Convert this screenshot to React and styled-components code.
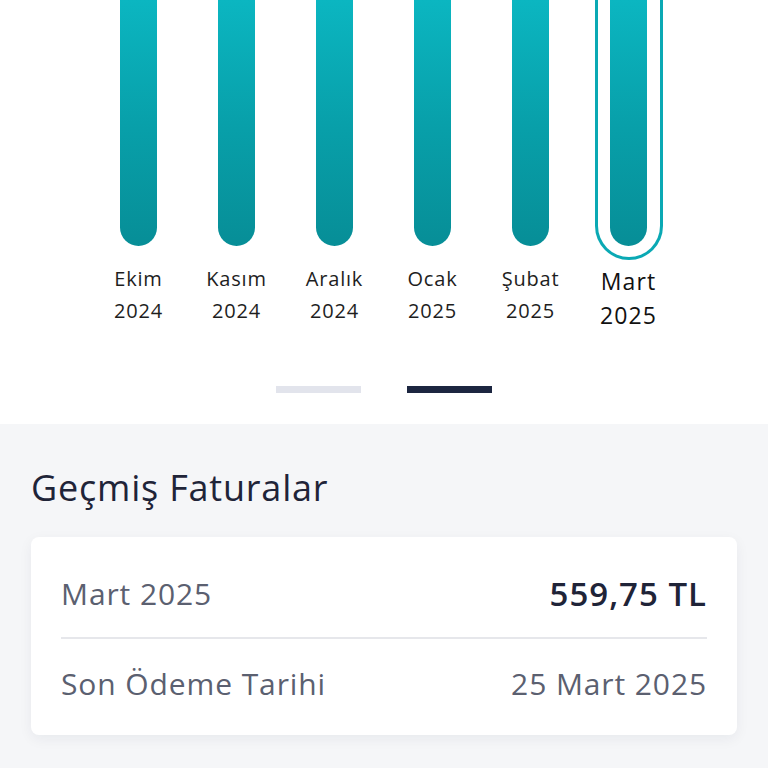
import React from "react";
import styled, { createGlobalStyle } from "styled-components";

const Global = createGlobalStyle`
  html, body { margin: 0; padding: 0; background: #f5f6f8; }
  body { font-family: "Open Sans", "Noto Sans", sans-serif; -webkit-font-smoothing: antialiased; }
`;

const Page = styled.div`
  width: 768px;
  min-height: 768px;
  background: #f5f6f8;
  overflow: hidden;
`;

const ChartSection = styled.section`
  background: #ffffff;
  height: 424px;
  display: flex;
  flex-direction: column;
  align-items: center;
`;

const Columns = styled.div`
  display: grid;
  grid-template-columns: repeat(6, 98px);
  width: 589px;
  height: 332px;
`;

const Column = styled.div`
  display: flex;
  flex-direction: column;
  align-items: center;
`;

const BarWrap = styled.div`
  height: 260px;
  display: flex;
  flex-direction: column;
  align-items: center;
`;

const Outline = styled.div`
  width: 68px;
  height: 260px;
  box-sizing: border-box;
  border: 3px solid #0aa9b4;
  border-top: none;
  border-radius: 0 0 34px 34px;
  display: flex;
  justify-content: center;
`;

const Bar = styled.div`
  width: 37px;
  height: 246px;
  flex-shrink: 0;
  border-radius: 0 0 18.5px 18.5px;
  background: linear-gradient(180deg, #0bb6c1 0%, #08a0aa 50%, #078e97 100%);
`;

const Label = styled.div`
  margin-top: ${(p) => (p.$active ? "4px" : "3px")};
  text-align: center;
  white-space: nowrap;
  color: ${(p) => (p.$active ? "#111111" : "#1e1e1e")};
  font-size: ${(p) => (p.$active ? "23px" : "20px")};
  letter-spacing: ${(p) => (p.$active ? "1.1px" : "0.8px")};
  line-height: ${(p) => (p.$active ? "34px" : "32px")};
  font-weight: ${(p) => (p.$active ? 500 : 400)};
`;

const Dots = styled.div`
  margin-top: 54px;
  display: flex;
  gap: 46px;
`;

const Dot = styled.div`
  width: 85px;
  height: 7px;
  background: ${(p) => (p.$active ? "#1c2640" : "#e2e4ec")};
`;

const History = styled.section`
  padding: 42px 31px 0;
`;

const Title = styled.h2`
  margin: 0 0 27px;
  font-size: 36px;
  letter-spacing: 0.8px;
  line-height: 44px;
  font-weight: 500;
  color: #1f2438;
`;

const Card = styled.div`
  background: #ffffff;
  border-radius: 8px;
  box-shadow: 0 4px 14px rgba(20, 30, 60, 0.06);
  padding: 12px 30px 8px;
`;

const Row = styled.div`
  display: flex;
  justify-content: space-between;
  align-items: center;
  height: 88px;
  font-size: 30px;
  letter-spacing: 0.9px;
  color: #5b6070;
  & + & {
    border-top: 2px solid #e6e7eb;
  }
`;

const Amount = styled.span`
  color: #1f2438;
  font-size: 33px;
  letter-spacing: 1px;
  font-weight: 600;
`;

const months = [
  ["Ekim", "2024"],
  ["Kasım", "2024"],
  ["Aralık", "2024"],
  ["Ocak", "2025"],
  ["Şubat", "2025"],
  ["Mart", "2025"],
];

export default function App() {
  return (
    <Page>
      <Global />
      <ChartSection>
        <Columns>
          {months.map(([m, y], i) => {
            const active = i === months.length - 1;
            return (
              <Column key={m}>
                <BarWrap>
                  {active ? (
                    <Outline>
                      <Bar />
                    </Outline>
                  ) : (
                    <Bar />
                  )}
                </BarWrap>
                <Label $active={active}>
                  {m}
                  <br />
                  {y}
                </Label>
              </Column>
            );
          })}
        </Columns>
        <Dots>
          <Dot />
          <Dot $active />
        </Dots>
      </ChartSection>
      <History>
        <Title>Geçmiş Faturalar</Title>
        <Card>
          <Row>
            <span>Mart 2025</span>
            <Amount>559,75 TL</Amount>
          </Row>
          <Row>
            <span>Son Ödeme Tarihi</span>
            <span>25 Mart 2025</span>
          </Row>
        </Card>
      </History>
    </Page>
  );
}
